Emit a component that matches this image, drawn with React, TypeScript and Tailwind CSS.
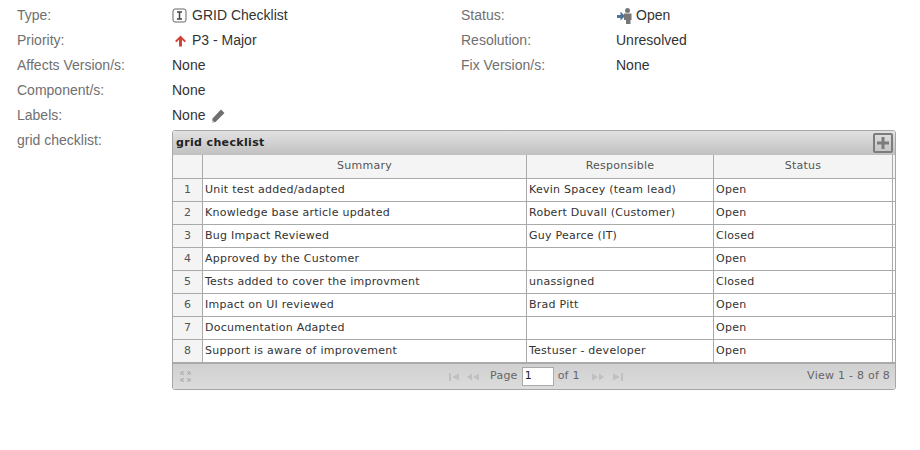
const rows = [
  ["1", "Unit test added/adapted", "Kevin Spacey (team lead)", "Open"],
  ["2", "Knowledge base article updated", "Robert Duvall (Customer)", "Open"],
  ["3", "Bug Impact Reviewed", "Guy Pearce (IT)", "Closed"],
  ["4", "Approved by the Customer", "", "Open"],
  ["5", "Tests added to cover the improvment", "unassigned", "Closed"],
  ["6", "Impact on UI reviewed", "Brad Pitt", "Open"],
  ["7", "Documentation Adapted", "", "Open"],
  ["8", "Support is aware of improvement", "Testuser - developer", "Open"],
];

function Field({ label, children }: { label: string; children: React.ReactNode }) {
  return (
    <div className="flex h-[25px] items-center">
      <div className="w-[155px] text-[#707070]">{label}</div>
      <div className="flex items-center text-[#333]">{children}</div>
    </div>
  );
}

function PagerIcon({ flip, double }: { flip?: boolean; double?: boolean }) {
  return (
    <svg width={double ? 12 : 10} height="8" viewBox={double ? "0 0 12 8" : "0 0 10 8"} className={flip ? "rotate-180" : ""}>
      {double ? (
        <path d="M0 4l5-3.500v7zM6 4l6-3.500v7z" fill="#c0c0c0" />
      ) : (
        <path d="M0 0h2v8H0zM3 4l7-3.500v7z" fill="#c0c0c0" />
      )}
    </svg>
  );
}

function Grid() {
  return (
    <div className="mt-[2px] w-[724px] rounded-[3px] border border-[#a6a6a6] font-['DejaVu_Sans',sans-serif] text-[11px] tracking-[0.25px]">
      <div className="flex h-[24px] items-center justify-between rounded-t-[3px] bg-gradient-to-b from-[#e2e2e2] to-[#c0c0c0] pl-[3px] pr-[2px]">
        <span className="font-bold tracking-[0.35px] text-[#222]">grid checklist</span>
        <div className="flex h-[20px] w-[20px] items-center justify-center rounded-[2px] border-2 border-[#7c7c7c]">
          <svg width="12" height="12" viewBox="0 0 12 12">
            <path d="M4.500 0h3v4.500H12v3H7.500V12h-3V7.500H0v-3h4.500z" fill="#7c7c7c" />
          </svg>
        </div>
      </div>

      <div className="flex h-[24px] border-b border-[#aaa] bg-[#f4f4f4] text-[#555]">
        <div className="w-[30px] border-r border-[#aaa]" />
        <div className="flex w-[324px] items-center justify-center border-r border-[#aaa]">Summary</div>
        <div className="flex w-[187px] items-center justify-center border-r border-[#aaa]">Responsible</div>
        <div className="flex w-[179px] items-center justify-center border-r border-[#aaa]">Status</div>
      </div>

      {rows.map((r) => (
        <div key={r[0]} className="flex h-[23px] border-b border-[#aaa] text-[#333]">
          <div className="flex w-[30px] items-center justify-center border-r border-[#aaa] bg-[#f4f4f4] text-[#555]">{r[0]}</div>
          <div className="flex w-[324px] items-center border-r border-[#aaa] pl-[2px]">{r[1]}</div>
          <div className="flex w-[187px] items-center border-r border-[#aaa] pl-[2px]">{r[2]}</div>
          <div className="flex w-[179px] items-center border-r border-[#aaa] pl-[2px]">{r[3]}</div>
        </div>
      ))}

      <div className="flex h-[26px] items-center rounded-b-[3px] border-t border-[#aaa] bg-gradient-to-b from-[#d0d0d0] to-[#dcdcdc] pl-[7px] pr-[5px] text-[#666]">
        <div className="w-[269px] shrink-0">
          <svg width="11" height="11" viewBox="0 0 11 11" fill="none" stroke="#a8a8a8">
            <path d="M1 4V1h3M7 1h3v3M10 7v3H7M4 10H1V7M1.500 1.500l2.500 2.500M9.500 1.500L7 4M9.500 9.500L7 7M1.500 9.500L4 7" />
          </svg>
        </div>
        <div className="flex items-center">
          <PagerIcon />
          <span className="w-[8px]" />
          <PagerIcon double />
          <span className="ml-[11px]">Page</span>
          <div className="ml-[4px] flex h-[19px] w-[32px] items-center border border-[#aaa] bg-white pl-[2px] text-[#222]">1</div>
          <span className="ml-[4px]">of 1</span>
          <span className="w-[12px]" />
          <PagerIcon flip double />
          <span className="w-[9px]" />
          <PagerIcon flip />
        </div>
        <span className="ml-auto">View 1 - 8 of 8</span>
      </div>
    </div>
  );
}

export default function App() {
  return (
    <div className="h-[450px] w-[920px] bg-white pl-[17px] pt-[3px] font-['Liberation_Sans',Arial,sans-serif] text-[14px]">
      <div className="flex">
        <div className="w-[444px]">
          <Field label="Type:">
            <svg width="15" height="15" viewBox="0 0 15 15" className="mr-[5px]" fill="none">
              <rect x="1" y="1" width="13" height="13" rx="2" stroke="#666" />
              <path d="M5 4h5M5 11h5M7.500 4v7" stroke="#444" strokeWidth="1.500" />
            </svg>
            GRID Checklist
          </Field>
          <Field label="Priority:">
            <svg width="15" height="12" viewBox="0 0 15 12" className="mr-[5px]">
              <path d="M8.500 0.500l5.500 5.500-1.500 1.300-2.500-2.500V11.500H7V4.800L4.500 7.300 3 6z" fill="#d04437" />
            </svg>
            P3 - Major
          </Field>
          <Field label="Affects Version/s:">None</Field>
          <Field label="Component/s:">None</Field>
          <Field label="Labels:">
            None
            <svg width="14" height="14" viewBox="0 0 14 14" className="ml-[6px]">
              <path d="M10 0.500l3.500 3.500-9 9L1 13.500l.500-4z" fill="#707070" />
              <path d="M1 13.500l.300-2.500 2.200 2.200z" fill="#d8d8d8" />
            </svg>
          </Field>
        </div>
        <div>
          <Field label="Status:">
            <svg width="18" height="16" viewBox="0 0 18 16" className="mr-[2px]">
              <path d="M1 7h3.500V3.500L9 8l-4.500 4.500V10H1z" fill="#4f7299" />
              <circle cx="11.500" cy="2.500" r="2.500" fill="#777" />
              <path d="M8 5.500h7.500v6.500h-1V16h-4.500v-4h-2z" fill="#777" />
            </svg>
            Open
          </Field>
          <Field label="Resolution:">Unresolved</Field>
          <Field label="Fix Version/s:">None</Field>
        </div>
      </div>
      <div className="flex">
        <div className="w-[155px] pt-[2px] text-[#707070]">grid checklist:</div>
        <Grid />
      </div>
    </div>
  );
}
